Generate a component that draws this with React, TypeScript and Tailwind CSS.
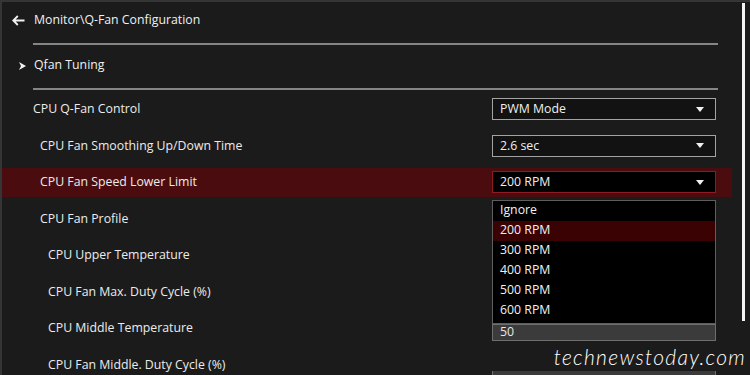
import React from 'react';

type Row = {
  label: string;
  indent: string;
  value: string;
  active?: boolean;
  box?: 'dark' | 'gray' | 'peek';
};

const rows: Row[] = [
  { label: 'CPU Q-Fan Control', indent: 'pl-[33px]', value: 'PWM Mode', box: 'dark' },
  { label: 'CPU Fan Smoothing Up/Down Time', indent: 'pl-[40px]', value: '2.6 sec', box: 'dark' },
  { label: 'CPU Fan Speed Lower Limit', indent: 'pl-[40px]', value: '200 RPM', box: 'dark', active: true },
  { label: 'CPU Fan Profile', indent: 'pl-[40px]', value: '' },
  { label: 'CPU Upper Temperature', indent: 'pl-[48px]', value: '' },
  { label: 'CPU Fan Max. Duty Cycle (%)', indent: 'pl-[48px]', value: '' },
  { label: 'CPU Middle Temperature', indent: 'pl-[48px]', value: '50', box: 'peek' },
  { label: 'CPU Fan Middle. Duty Cycle (%)', indent: 'pl-[48px]', value: '', box: 'gray' },
];

const options = ['Ignore', '200 RPM', '300 RPM', '400 RPM', '500 RPM', '600 RPM'];

function Caret() {
  return (
    <svg width="8" height="5" viewBox="0 0 8 5" aria-hidden="true">
      <path d="M0 0 H8 L4 5 Z" fill="#f0f0f0" />
    </svg>
  );
}

function ValueBox({ row }: { row: Row }) {
  if (!row.box) return null;

  if (row.box === 'peek') {
    // top part sits under the open list, only the lower strip shows
    return (
      <div className="w-[224px] h-[17px] mt-[8px] flex items-center px-[7px] pb-[1px] bg-[#3b3b3b] border border-[#6e6e6e] text-[12.3px] font-medium leading-none text-[#e8e8e8]">
        {row.value}
      </div>
    );
  }

  if (row.box === 'gray') {
    return (
      <div className="w-[224px] h-[22px] flex items-center px-[7px] bg-[#3b3b3b] border border-[#6e6e6e] text-[12.3px] text-[#e8e8e8]">
        {row.value}
      </div>
    );
  }

  return (
    <div
      className={
        row.active
          ? 'w-[224px] h-[22px] flex items-center justify-between pl-[7px] pr-[11px] bg-black border border-[#8e1b22] text-[12.3px] font-medium text-[#f0f0f0]'
          : 'w-[224px] h-[22px] flex items-center justify-between pl-[7px] pr-[11px] bg-[#121212] border border-[#a3a3a3] text-[12.3px] font-medium text-[#f0f0f0]'
      }
    >
      <span>{row.value}</span>
      <Caret />
    </div>
  );
}

export default function App() {
  return (
    <div
      className="relative w-[750px] h-[375px] overflow-hidden bg-[#1b1b1b] border-t-2 border-l-2 border-[#353535] text-[#ececec]"
      style={{ fontFamily: '"Open Sans", "Noto Sans", sans-serif' }}
    >
      {/* Header */}
      <div className="h-[41px] flex items-center pl-[10px] pb-[5px] gap-[9px]">
        <svg width="13" height="11" viewBox="0 0 13 11" aria-hidden="true">
          <path d="M12.5 5.5 H1.5 M5.8 1 L1.3 5.5 L5.8 10" stroke="#f2f2f2" strokeWidth="1.8" fill="none" />
        </svg>
        <span className="text-[12.3px] font-medium text-[#f0f0f0]">Monitor\Q-Fan Configuration</span>
      </div>
      <div className="ml-[31px] w-[685px] h-[2px] bg-[#858585]" />

      {/* Qfan Tuning */}
      <div className="h-[43px] flex items-center pl-[17px] pb-[2px] gap-[8px]">
        <svg width="7" height="8" viewBox="0 0 7 8" aria-hidden="true">
          <path d="M0 0 L7 4 L0 8 L2 4 Z" fill="#f2f2f2" />
        </svg>
        <span className="text-[12.3px] font-medium text-[#f0f0f0]">Qfan Tuning</span>
      </div>
      <div className="ml-[31px] w-[685px] h-[2px] bg-[#858585]" />

      {/* Settings rows */}
      <div className="flex flex-col pt-[1px]">
        {rows.map((row) => (
          <div key={row.label} className="h-[36.5px] flex items-center">
            <div
              className={
                row.active
                  ? 'w-[730px] h-[29px] flex items-center justify-between bg-[#4a0c0e] pr-[16px]'
                  : 'w-[730px] h-[29px] flex items-center justify-between pr-[16px]'
              }
            >
              <span className={`${row.indent} text-[12.3px] font-medium text-[#ececec] -ml-[2px]`}>{row.label}</span>
              <ValueBox row={row} />
            </div>
          </div>
        ))}
      </div>

      {/* Open option list */}
      <div className="absolute left-[490px] top-[198px] w-[224px] h-[124px] bg-black border border-[#5e5e5e]">
        {options.map((opt) => (
          <div
            key={opt}
            className={
              opt === '200 RPM'
                ? 'h-[20px] flex items-center pl-[7px] pb-[1px] bg-[#3a0202] text-[12.3px] font-medium text-[#f2f2f2]'
                : 'h-[20px] flex items-center pl-[7px] pb-[1px] text-[12.3px] font-medium text-[#f2f2f2]'
            }
          >
            {opt}
          </div>
        ))}
      </div>

      {/* Scrollbar */}
      <div className="absolute left-[740px] top-[1px] w-[3px] h-[318px] bg-[#f4f4f4]" />

      {/* Watermark */}
      <div className="absolute left-[478px] top-[340px] w-[272px] h-[29px] bg-[#1b1b1b] flex items-center justify-end pr-[6px]">
        <span
          className="italic font-light text-[21px] text-white tracking-[1.3px]"
          style={{ fontFamily: 'Lato, "Open Sans", sans-serif' }}
        >
          technewstoday.com
        </span>
      </div>
    </div>
  );
}
